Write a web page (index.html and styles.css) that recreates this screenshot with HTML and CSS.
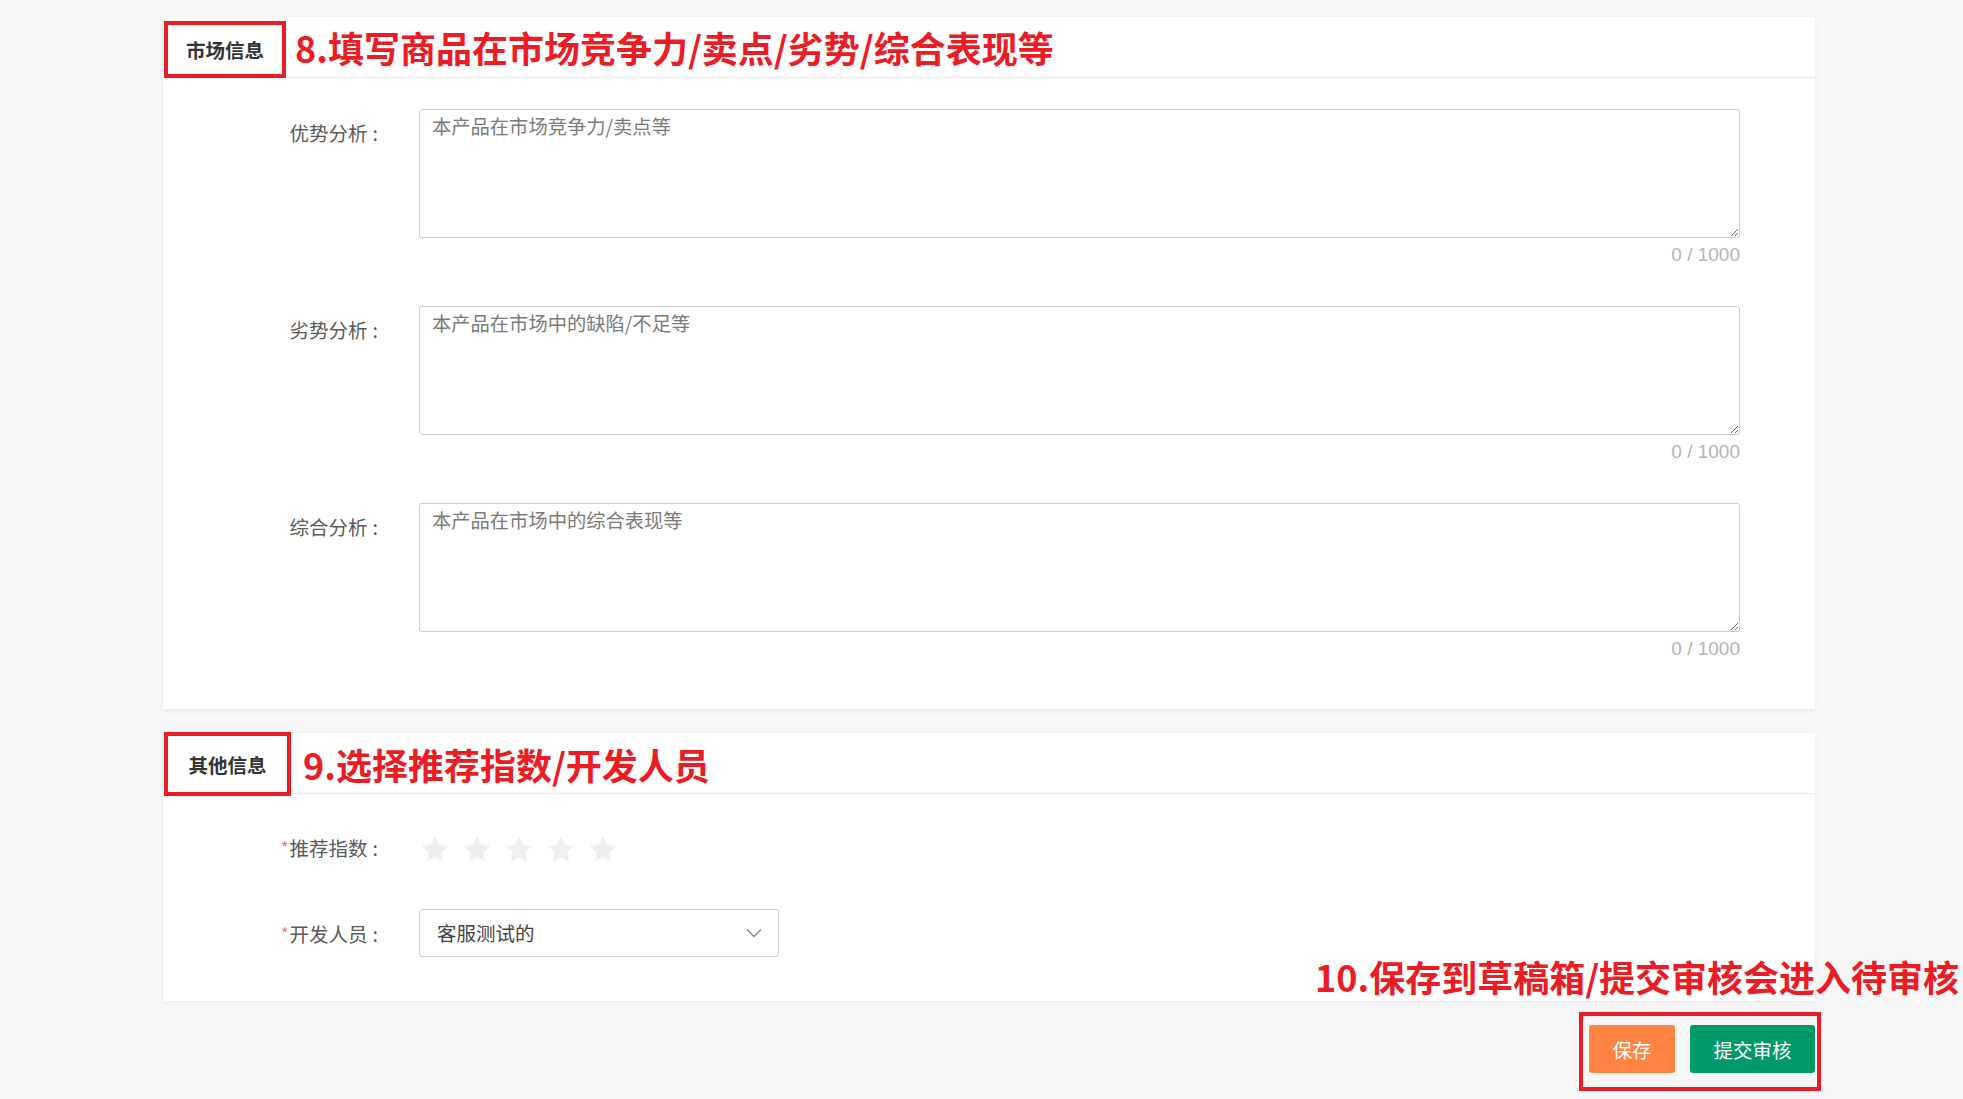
FILE: index.html
```html
<!DOCTYPE html>
<html lang="zh-CN">
<head>
<meta charset="utf-8">
<title>商品信息</title>
<link rel="stylesheet" href="styles.css">
</head>
<body>
<div class="page">
  <section class="card card-market">
    <div class="card-head">
      <div class="tag-box tag-market">市场信息</div>
      <div class="note note-lg">8.填写商品在市场竞争力/卖点/劣势/综合表现等</div>
    </div>
    <div class="card-body body-market">
      <div class="form-row">
        <label class="label">优势分析<span class="colon">:</span></label>
        <div class="field">
          <textarea class="textarea" placeholder="本产品在市场竞争力/卖点等"></textarea>
          <div class="counter">0 / 1000</div>
        </div>
      </div>
      <div class="form-row">
        <label class="label">劣势分析<span class="colon">:</span></label>
        <div class="field">
          <textarea class="textarea" placeholder="本产品在市场中的缺陷/不足等"></textarea>
          <div class="counter">0 / 1000</div>
        </div>
      </div>
      <div class="form-row">
        <label class="label">综合分析<span class="colon">:</span></label>
        <div class="field">
          <textarea class="textarea" placeholder="本产品在市场中的综合表现等"></textarea>
          <div class="counter">0 / 1000</div>
        </div>
      </div>
    </div>
  </section>

  <section class="card card-other">
    <div class="card-head">
      <div class="tag-box tag-other">其他信息</div>
      <div class="note note-md">9.选择推荐指数/开发人员</div>
    </div>
    <div class="card-body body-other">
      <div class="form-row row-rate">
        <label class="label"><span class="req">*</span>推荐指数<span class="colon">:</span></label>
        <div class="stars">
          <svg class="star" viewBox="0 0 28 27"><path d="M14 0.5l3.9 8.6 9.3 1-7 6.3 2 9.2L14 20.9l-8.2 4.7 2-9.2-7-6.3 9.3-1z"/></svg>
          <svg class="star" viewBox="0 0 28 27"><path d="M14 0.5l3.9 8.6 9.3 1-7 6.3 2 9.2L14 20.9l-8.2 4.7 2-9.2-7-6.3 9.3-1z"/></svg>
          <svg class="star" viewBox="0 0 28 27"><path d="M14 0.5l3.9 8.6 9.3 1-7 6.3 2 9.2L14 20.9l-8.2 4.7 2-9.2-7-6.3 9.3-1z"/></svg>
          <svg class="star" viewBox="0 0 28 27"><path d="M14 0.5l3.9 8.6 9.3 1-7 6.3 2 9.2L14 20.9l-8.2 4.7 2-9.2-7-6.3 9.3-1z"/></svg>
          <svg class="star" viewBox="0 0 28 27"><path d="M14 0.5l3.9 8.6 9.3 1-7 6.3 2 9.2L14 20.9l-8.2 4.7 2-9.2-7-6.3 9.3-1z"/></svg>
        </div>
      </div>
      <div class="form-row row-select">
        <label class="label"><span class="req">*</span>开发人员<span class="colon">:</span></label>
        <div class="select">
          <span class="select-value">客服测试的</span>
          <svg class="chevron" viewBox="0 0 16 10"><path d="M1 1.5l7 7 7-7" fill="none" stroke="#8a8a8a" stroke-width="1.4"/></svg>
        </div>
      </div>
    </div>
  </section>

  <div class="footer">
    <div class="note note-md note-footer">10.保存到草稿箱/提交审核会进入待审核</div>
    <div class="btn-box">
      <button class="btn btn-save">保存</button>
      <button class="btn btn-submit">提交审核</button>
    </div>
  </div>
</div>
</body>
</html>
```

FILE: styles.css
```css
* { box-sizing: border-box; }

html, body {
  margin: 0;
  padding: 0;
}

body {
  background: #f7f7f7;
  font-family: "Noto Sans CJK SC", "Liberation Sans", sans-serif;
  color: #555;
  overflow: hidden;
}

.page {
  width: 1815px;
  padding: 17px 0 0 163px;
}

.card {
  background: #fff;
  box-shadow: 0 2px 5px rgba(0, 0, 0, 0.05);
}

.card-other {
  margin-top: 24px;
}

.card-head {
  height: 61px;
  border-bottom: 1px solid #ebebeb;
  display: flex;
  align-items: center;
}

.tag-box {
  align-self: flex-start;
  border: 4px solid #ec1c24;
  display: flex;
  align-items: center;
  justify-content: center;
  font-size: 19.5px;
  font-weight: 700;
  color: #333;
  background: #fff;
  position: relative;
  z-index: 1;
  flex-shrink: 0;
}

.tag-market {
  width: 122px;
  height: 57px;
  margin-top: 4px;
  margin-left: 1px;
}

.tag-other {
  width: 127px;
  height: 64px;
  margin-top: -1px;
  margin-left: 1px;
}

.note {
  color: #ec1c24;
  font-weight: 700;
  line-height: 1;
  white-space: nowrap;
  font-size: 36px;
}

.note-lg {
  margin-left: 9px;
}

.tag-other + .note-md {
  margin-left: 12px;
  margin-top: 2px;
}

.card-body {
  padding-right: 75px;
}

.body-market {
  padding-top: 31px;
  padding-bottom: 48px;
}

.body-other {
  padding-top: 37px;
  padding-bottom: 44px;
}

.form-row {
  display: flex;
  align-items: flex-start;
}

.body-market .form-row + .form-row {
  margin-top: 39px;
}

.label {
  width: 215px;
  flex-shrink: 0;
  text-align: right;
  font-size: 19.5px;
  line-height: 24px;
  color: #5a5a5a;
  margin-right: 41px;
  padding-top: 12px;
}

.colon {
  margin-left: 5px;
}

.req {
  color: #f56c6c;
  font-size: 16px;
  margin-right: 1px;
  vertical-align: 2px;
}

.field {
  flex: 1;
}

.textarea {
  display: block;
  width: 100%;
  height: 129px;
  border: 1px solid #cccccc;
  border-radius: 3px;
  padding: 4px 12px;
  font-family: "Noto Sans CJK SC", "Liberation Sans", sans-serif;
  font-size: 19.3px;
  line-height: 24px;
  color: #333;
  resize: vertical;
  outline: none;
  background: #fff;
}

.textarea::placeholder {
  color: #7a7a7a;
}

.counter {
  margin-top: 5px;
  text-align: right;
  font-family: "Liberation Sans", Arial, sans-serif;
  font-size: 19px;
  line-height: 24px;
  color: #b4b4b4;
}

.row-rate {
  align-items: center;
  height: 36px;
}

.row-rate .label,
.row-select .label {
  padding-top: 0;
}

.row-rate .label {
  margin-top: -3px;
}

.stars {
  display: flex;
  gap: 14px;
  margin-left: 2px;
}

.star {
  width: 28px;
  height: 27px;
  fill: #efefef;
  display: block;
}

.row-select {
  margin-top: 42px;
  align-items: center;
}

.select {
  width: 360px;
  height: 48px;
  border: 1px solid #cccccc;
  border-radius: 3px;
  display: flex;
  align-items: center;
  justify-content: space-between;
  padding: 0 16px 0 17px;
}

.select-value {
  font-size: 19.5px;
  color: #444;
  margin-top: -2px;
}

.chevron {
  width: 16px;
  height: 10px;
  display: block;
}

.footer {
  position: relative;
  display: flex;
  justify-content: flex-end;
  margin-top: 11px;
  margin-right: -6px;
}

.note-footer {
  position: absolute;
  left: 1152px;
  top: -54px;
}

.btn-box {
  border: 4px solid #ec1c24;
  padding: 9px 2px 14px 6px;
  display: flex;
  gap: 15px;
}

.btn {
  height: 48px;
  border: none;
  border-radius: 3px;
  color: #fff;
  font-family: "Noto Sans CJK SC", "Liberation Sans", sans-serif;
  font-size: 19.5px;
  padding: 0;
}

.btn-save {
  width: 86px;
  background: #ff8444;
}

.btn-submit {
  width: 125px;
  background: #00996a;
}
```
